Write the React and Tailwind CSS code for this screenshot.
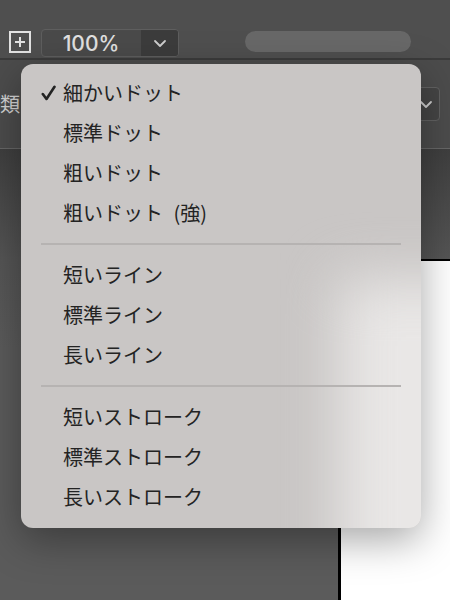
import React from "react";

const groups = [
  ["細かいドット", "標準ドット", "粗いドット", "粗いドット (強)"],
  ["短いライン", "標準ライン", "長いライン"],
  ["短いストローク", "標準ストローク", "長いストローク"],
];

function Chevron({ className }) {
  return (
    <svg width="14" height="9" viewBox="0 0 14 9" className={className}>
      <path d="M2 2 L7 7 L12 2" fill="none" stroke="currentColor" strokeWidth="1.8" strokeLinecap="round" strokeLinejoin="round" />
    </svg>
  );
}

export default function App() {
  const jp = { fontFamily: '"Hiragino Sans","Noto Sans CJK JP",sans-serif' };
  return (
    <div className="relative w-[450px] h-[600px] overflow-hidden bg-[#5b5b5b] flex flex-col" style={jp}>
      {/* top toolbar */}
      <div className="h-[58px] shrink-0 bg-[#4f4f4f] flex items-end pb-[1px] pl-[9px]">
        <div className="flex items-center">
          <div className="w-[22px] h-[22px] border-2 border-[#e2e2e2] flex items-center justify-center mb-[2px]">
            <svg width="12" height="12" viewBox="0 0 12 12">
              <path d="M6 1 V11 M1 6 H11" stroke="#e2e2e2" strokeWidth="2" />
            </svg>
          </div>
          <div className="ml-[10px] w-[138px] h-[28px] border border-[#5e5e5e] rounded-[4px] bg-[#4a4a4a] flex overflow-hidden">
            <div className="flex-1 flex items-center justify-center text-[21px] font-medium leading-none text-[#e0e0e0]" style={{ fontFamily: 'Inter,"Liberation Sans",sans-serif' }}>
              100%
            </div>
            <div className="w-[37px] ml-[1px] bg-[#3c3c3c] flex items-center justify-center text-[#cfcfcf]">
              <Chevron />
            </div>
          </div>
          <div className="ml-[66px] mb-[4px] w-[166px] h-[21px] rounded-full bg-[#686868]" />
        </div>
      </div>
      <div className="h-[2px] shrink-0 bg-[#3b3b3b]" />
      {/* second bar */}
      <div className="h-[89px] shrink-0 bg-[#4c4c4c] flex items-center justify-between border-b border-[#676767]">
        <span className="ml-0 text-[20px] text-[#d4d4d4]">類</span>
        <div className="mr-[10px] w-[50px] h-[34px] border border-[#626262] rounded-[4px] bg-[#454545] flex items-center justify-end pr-[6px] text-[#cfcfcf]">
          <Chevron />
        </div>
      </div>
      {/* canvas */}
      <div className="flex-1 bg-[linear-gradient(to_bottom,#3f3f3f_0px,#555555_110px,#5b5b5b_200px)] flex flex-col">
        <div className="h-[110px] shrink-0" />
        <div className="flex-1 flex justify-end">
          <div className="w-[112px] h-full bg-white border-l-[3px] border-t-[2px] border-black" />
        </div>
      </div>

      {/* popup menu */}
      <div className="absolute left-[21px] top-[64px] w-[400px] rounded-[12px] overflow-hidden bg-[#c9c6c5] shadow-[0_12px_40px_rgba(0,0,0,0.35)] pt-[9px] pb-[11px] text-[#232323]">
        {/* vibrancy glow from the white page behind */}
        <div className="absolute left-[318px] top-[215px] w-[200px] h-[400px] bg-[#e9e7e6] blur-[28px]" />
        <div className="relative">
          {groups.map((g, gi) => (
            <div key={gi}>
              {gi > 0 && <div className="mx-[20px] my-[10px] h-[2px] bg-[#b6b3b2]" />}
              {g.map((label, i) => (
                <div key={label} className="h-[40px] flex items-center text-[20px] leading-none [word-spacing:6px]">
                  <div className="w-[42px] shrink-0 flex justify-start pl-[20px]">
                    {gi === 0 && i === 0 && (
                      <svg width="15" height="16" viewBox="0 0 15 16">
                        <path d="M1.8 9 L5.5 14 L13.5 1.8" fill="none" stroke="#232323" strokeWidth="2.6" strokeLinecap="round" strokeLinejoin="round" />
                      </svg>
                    )}
                  </div>
                  <span>{label}</span>
                </div>
              ))}
            </div>
          ))}
        </div>
      </div>
    </div>
  );
}
